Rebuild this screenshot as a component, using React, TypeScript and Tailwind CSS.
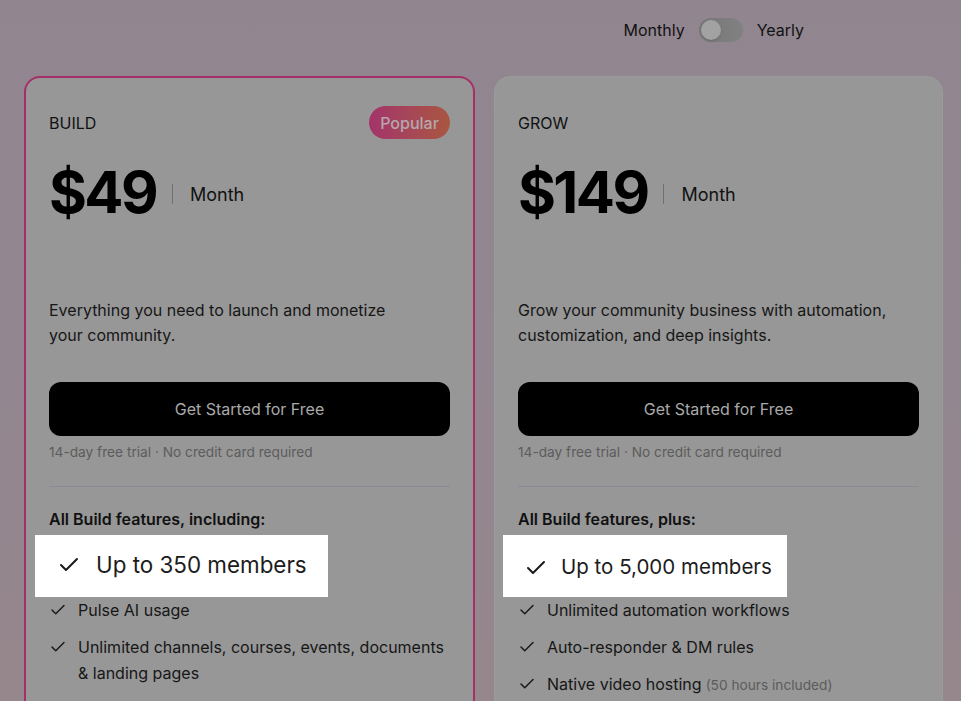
import { Check } from 'lucide-react';

type Feature = { text: string; note?: string };

type Plan = {
  name: string;
  price: string;
  blurb: string;
  heading: string;
  spotlight: string;
  spotBox: string;
  spotText: string;
  features: Feature[];
  popular?: boolean;
};

const plans: Plan[] = [
  {
    name: 'BUILD',
    price: '$49',
    blurb: 'Everything you need to launch and monetize your community.',
    heading: 'All Build features, including:',
    spotlight: 'Up to 350 members',
    spotBox: 'absolute left-[-14px] top-[-13px] flex h-[62px] w-[293px] items-center gap-[15px] bg-white pl-[22px] pb-[3px]',
    spotText: 'text-[22.4px] text-[#1c1c1c]',
    features: [
      { text: 'Pulse AI usage' },
      { text: 'Unlimited channels, courses, events, documents & landing pages' },
    ],
    popular: true,
  },
  {
    name: 'GROW',
    price: '$149',
    blurb: 'Grow your community business with automation, customization, and deep insights.',
    heading: 'All Build features, plus:',
    spotlight: 'Up to 5,000 members',
    spotBox: 'absolute left-[-15px] top-[-13px] flex h-[62px] w-[284px] items-center gap-[13px] bg-white pl-[21px] pt-[3px]',
    spotText: 'text-[20.5px] text-[#1c1c1c]',
    features: [
      { text: 'Unlimited automation workflows' },
      { text: 'Auto-responder & DM rules' },
      { text: 'Native video hosting', note: '(50 hours included)' },
    ],
  },
];

function PlanCard({ plan }: { plan: Plan }) {
  return (
    <div
      className={
        plan.popular
          ? 'w-[451px] shrink-0 rounded-[16px] border-2 border-[#a52f68] bg-[#979797] px-[23px] pt-[28px] pb-10'
          : 'w-[449px] shrink-0 rounded-[16px] border border-[#9b9b9b] bg-[#979797] px-[23px] pt-[29px] pb-10'
      }
    >
      <div className="flex h-[33px] items-center justify-between">
        <span className="text-[16px] text-[#111]">{plan.name}</span>
        {plan.popular && (
          <span className="flex h-[33px] w-[81px] items-center justify-center rounded-full bg-gradient-to-r from-[#a3336a] to-[#a9563f] text-[16px] font-medium text-[#b6a7ad]">
            Popular
          </span>
        )}
      </div>

      <div className="mt-[23px] flex h-[60px] items-center">
        <span className="text-[58px] font-bold leading-none tracking-[-0.045em] text-black">{plan.price}</span>
        <span className="ml-[16px] mr-[17px] mt-[4px] h-[20px] w-px bg-[#6f6f7a]" />
        <span className="mt-[4px] text-[18px] text-[#111]">Month</span>
      </div>

      <p className="mt-[76px] max-w-[372px] text-[16px] leading-[25px] text-[#161616]">{plan.blurb}</p>

      <button className="mt-[34px] flex h-[54px] w-full items-center justify-center rounded-[12px] bg-black text-[16px] text-[#a9a9a9]">
        Get Started for Free
      </button>
      <p className="mt-[7px] text-[13.7px] leading-[18px] text-[#5c5c5c]">14-day free trial · No credit card required</p>

      <div className="mt-[25px] h-px bg-[#8a8996]" />

      <p className="mt-[20px] text-[16px] font-semibold leading-[24px] text-[#111]">{plan.heading}</p>

      <ul className="mt-[17px] flex flex-col gap-[11px]">
        <li className="relative h-[38px]">
          <div className={plan.spotBox}>
            <Check className="h-[24px] w-[24px] shrink-0 text-[#1a1a1a]" strokeWidth={2} />
            <span className={plan.spotText}>{plan.spotlight}</span>
          </div>
        </li>
        {plan.features.map((f) => (
          <li key={f.text} className="flex items-start gap-[11px]">
            <Check className="mt-[4px] h-[18px] w-[18px] shrink-0 text-[#1a1a1a]" strokeWidth={2} />
            <span className="text-[16px] leading-[26px] text-[#161616]">
              {f.text}
              {f.note && <span className="ml-1 text-[13.7px] text-[#5c5c5c]">{f.note}</span>}
            </span>
          </li>
        ))}
      </ul>
    </div>
  );
}

export default function App() {
  return (
    <div className="h-[701px] w-full overflow-hidden bg-gradient-to-b from-[#918690] via-[#928690] to-[#96878c] font-['Inter',sans-serif]">
      <div className="flex items-center justify-end gap-[14px] pr-[157px] pt-[18px]">
        <span className="text-[16px] text-[#111]">Monthly</span>
        <div className="flex h-[24px] w-[44px] items-center rounded-full bg-gradient-to-r from-[#777] to-[#818181] px-[2px]">
          <div className="h-[20px] w-[20px] rounded-full bg-[#a2a2a2] shadow-sm" />
        </div>
        <span className="text-[16px] text-[#111]">Yearly</span>
      </div>

      <div className="mt-[34px] flex gap-[19px] pl-[24px]">
        {plans.map((p) => (
          <PlanCard key={p.name} plan={p} />
        ))}
      </div>
    </div>
  );
}
